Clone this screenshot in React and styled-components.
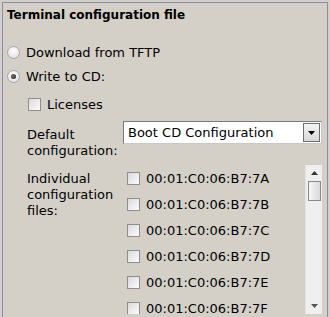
import styled, { createGlobalStyle } from "styled-components";

const GlobalStyle = createGlobalStyle`
  html, body {
    margin: 0;
    padding: 0;
    background: #d4d0c8;
    overflow: hidden;
  }
  body {
    font-family: "DejaVu Sans", Verdana, sans-serif;
    font-size: 13px;
    color: #000;
  }
`;

const macs = ["7A", "7B", "7C", "7D", "7E", "7F"].map((s) => `00:01:C0:06:B7:${s}`);

export default function App() {
  return (
    <>
      <GlobalStyle />
      <Panel>
        <Title>Terminal configuration file</Title>
        <RadioRow>
          <Radio />
          <span>Download from TFTP</span>
        </RadioRow>
        <RadioRow>
          <Radio checked />
          <span>Write to CD:</span>
        </RadioRow>
        <Indent>
          <CheckRow>
            <Check />
            <span>Licenses</span>
          </CheckRow>
          <FieldRow>
            <Label>Default<br />configuration:</Label>
            <Select>
              <SelectText>Boot CD Configuration</SelectText>
              <SelectButton>
                <svg width="7" height="4" viewBox="0 0 7 4">
                  <path d="M0 0h7L3.5 4z" fill="#000" />
                </svg>
              </SelectButton>
            </Select>
          </FieldRow>
          <ListRow>
            <Label>Individual<br />configuration<br />files:</Label>
            <List>
              <Items>
                {macs.map((m) => (
                  <ItemRow key={m}>
                    <Check />
                    <span>{m}</span>
                  </ItemRow>
                ))}
              </Items>
              <ScrollBar>
                <Arrow>
                  <svg width="7" height="4" viewBox="0 0 7 4">
                    <path d="M3.5 0L7 4H0z" fill="#333" />
                  </svg>
                </Arrow>
                <Thumb />
                <Track />
                <Arrow>
                  <svg width="7" height="4" viewBox="0 0 7 4">
                    <path d="M0 0h7L3.5 4z" fill="#555" />
                  </svg>
                </Arrow>
              </ScrollBar>
            </List>
          </ListRow>
        </Indent>
      </Panel>
    </>
  );
}

const Panel = styled.div`
  margin: 2px 2px 0 2px;
  height: 330px;
  border: 1px solid #8b8bb0;
  border-bottom: none;
  box-sizing: border-box;
  padding: 4px 5px 0 4px;
`;

const Title = styled.div`
  font-weight: bold;
  font-size: 12px;
  line-height: 16px;
  margin-bottom: 17px;
`;

const RadioRow = styled.div`
  display: flex;
  align-items: center;
  gap: 6px;
  height: 24px;
`;

const Radio = styled.span`
  width: 11px;
  height: 11px;
  border-radius: 50%;
  border: 1px solid #a8a8a8;
  background: radial-gradient(circle at 50% 35%, #fdfdfd, #dcdcdc);
  position: relative;
  flex: none;
  &::after {
    content: "";
    display: ${(p) => (p.checked ? "block" : "none")};
    position: absolute;
    left: 3px;
    top: 3px;
    width: 5px;
    height: 5px;
    border-radius: 50%;
    background: radial-gradient(circle at 40% 40%, #777, #111);
  }
`;

const Indent = styled.div`
  padding-left: 20px;
  margin-top: 4px;
`;

const Check = styled.span`
  width: 11px;
  height: 11px;
  border: 1px solid #8e8e8e;
  background: linear-gradient(135deg, #dadada, #fcfcfc);
  flex: none;
`;

const CheckRow = styled.div`
  display: flex;
  align-items: center;
  gap: 6px;
  height: 24px;
  padding-left: 1px;
`;

const FieldRow = styled.div`
  display: grid;
  grid-template-columns: 96px 1fr;
  margin-top: 5px;
  height: 44px;
`;

const Label = styled.div`
  line-height: 16px;
  padding-top: 6px;
`;

const Select = styled.div`
  height: 23px;
  box-sizing: border-box;
  background: #fff;
  border: 1px solid #7a7a7a;
  border-right-color: #c8c8c8;
  border-bottom-color: #c8c8c8;
  display: flex;
  align-items: center;
`;

const SelectText = styled.div`
  flex: 1;
  padding-left: 4px;
`;

const SelectButton = styled.div`
  width: 15px;
  height: 17px;
  margin-right: 1px;
  border: 1px solid #6e6e6e;
  background: linear-gradient(#f4f4f4, #d8d8d8);
  display: flex;
  align-items: center;
  justify-content: center;
`;

const ListRow = styled.div`
  display: grid;
  grid-template-columns: 96px 1fr;
`;

const List = styled.div`
  display: flex;
  height: 149px;
  overflow: hidden;
`;

const Items = styled.div`
  flex: 1;
  padding-left: 4px;
`;

const ItemRow = styled.div`
  display: flex;
  align-items: center;
  gap: 6px;
  height: 26px;
  flex: none;
`;

const ScrollBar = styled.div`
  width: 16px;
  background: #efefef;
  border-left: 1px solid #e4e4e4;
  display: flex;
  flex-direction: column;
  align-items: center;
`;

const Arrow = styled.div`
  height: 16px;
  display: flex;
  align-items: center;
  justify-content: center;
`;

const Thumb = styled.div`
  width: 13px;
  height: 20px;
  box-sizing: border-box;
  border: 1px solid #8a8a8a;
  background: linear-gradient(90deg, #f6f6f6, #dadada);
`;

const Track = styled.div`
  flex: 1;
`;
